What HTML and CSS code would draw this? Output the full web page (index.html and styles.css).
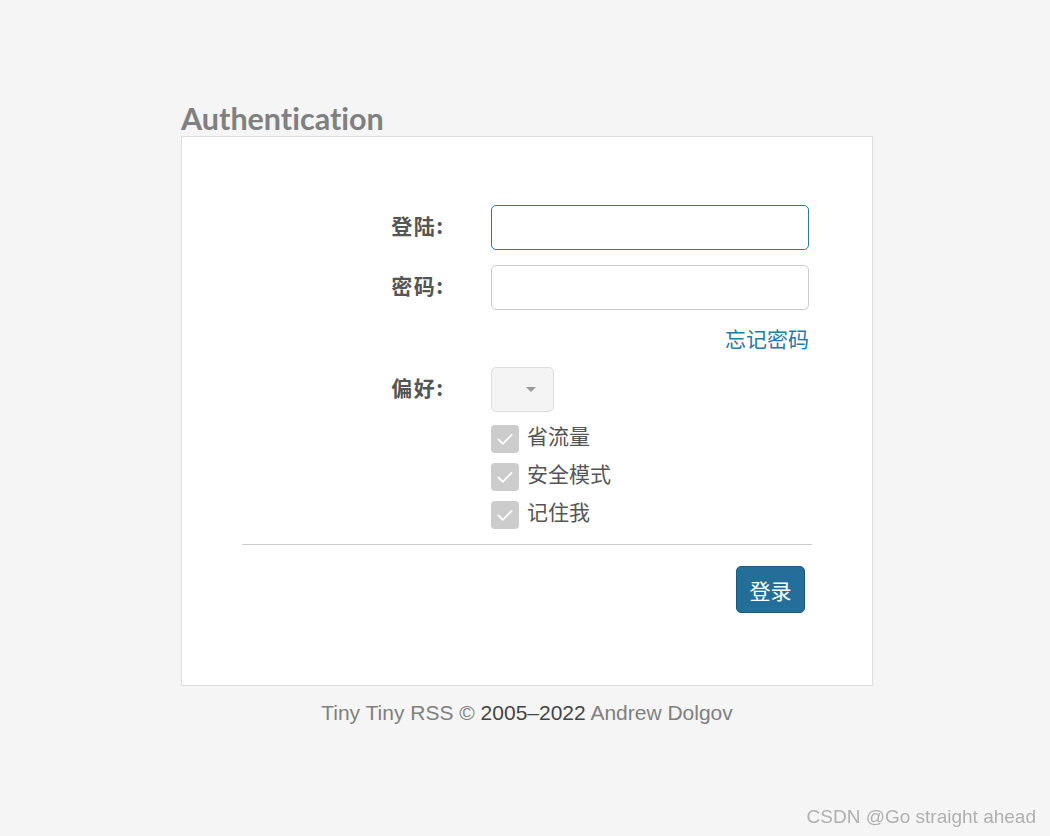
FILE: index.html
```html
<!DOCTYPE html>
<html lang="zh">
<head>
<meta charset="utf-8">
<title>Tiny Tiny RSS : Login</title>
<link rel="stylesheet" href="styles.css">
</head>
<body>
<div class="container">
  <h1 class="title">Authentication</h1>
  <div class="panel">
    <form class="login-form">
      <div class="row">
        <label class="label">登陆:</label>
        <input class="input focused" type="text">
      </div>
      <div class="row">
        <label class="label">密码:</label>
        <input class="input" type="password">
      </div>
      <div class="row link-row">
        <span></span>
        <a class="forgot" href="#">忘记密码</a>
      </div>
      <div class="row">
        <label class="label">偏好:</label>
        <div class="select"><span class="caret"></span></div>
      </div>
      <div class="row checks-row">
        <span></span>
        <div class="checks">
          <div class="check"><span class="box"><svg viewBox="0 0 28 28" width="28" height="28"><path d="M7.5 14.5 L11.8 18.8 L20.5 10" fill="none" stroke="#fff" stroke-width="1.8" stroke-linecap="round" stroke-linejoin="round"/></svg></span><span class="check-text">省流量</span></div>
          <div class="check"><span class="box"><svg viewBox="0 0 28 28" width="28" height="28"><path d="M7.5 14.5 L11.8 18.8 L20.5 10" fill="none" stroke="#fff" stroke-width="1.8" stroke-linecap="round" stroke-linejoin="round"/></svg></span><span class="check-text">安全模式</span></div>
          <div class="check"><span class="box"><svg viewBox="0 0 28 28" width="28" height="28"><path d="M7.5 14.5 L11.8 18.8 L20.5 10" fill="none" stroke="#fff" stroke-width="1.8" stroke-linecap="round" stroke-linejoin="round"/></svg></span><span class="check-text">记住我</span></div>
        </div>
      </div>
      <hr class="divider">
      <div class="actions">
        <button class="btn" type="button">登录</button>
      </div>
    </form>
  </div>
  <div class="footer">Tiny Tiny RSS © <span class="years">2005–2022</span> Andrew Dolgov</div>
</div>
<div class="watermark">CSDN @Go straight ahead</div>
</body>
</html>
```
FILE: styles.css
```css
html, body {
  margin: 0;
  padding: 0;
  background: #f5f5f5;
}
body {
  font-family: "Noto Sans CJK SC", "Noto Sans", sans-serif;
  color: #555;
  height: 836px;
  overflow: hidden;
}
.container {
  width: 692px;
  margin: 0 0 0 181px;
  padding-top: 100px;
}
.title {
  margin: 0;
  font-family: Lato, "Open Sans", sans-serif;
  font-weight: 700;
  font-size: 30.5px;
  line-height: 36px;
  color: #808080;
  font-variant-ligatures: none;
}
.panel {
  background: #fff;
  border: 1px solid #ddd;
  box-sizing: border-box;
  height: 550px;
  padding: 68px 60px 0 60px;
}
.login-form {
  display: flex;
  flex-direction: column;
}
.row {
  display: grid;
  grid-template-columns: 201px 318px;
  column-gap: 48px;
  align-items: center;
  margin-bottom: 15px;
}
.label {
  text-align: right;
  font-weight: 700;
  font-size: 21px;
  letter-spacing: 1.5px;
  margin-right: -1.5px;
  color: #555;
  position: relative;
  top: -3px;
}
.input {
  box-sizing: border-box;
  height: 45px;
  width: 318px;
  border: 1px solid #ccc;
  border-radius: 5px;
  background: #fff;
  margin: 0;
  outline: none;
}
.input.focused {
  border-color: #257aa6;
}
.link-row {
  height: 27px;
}
.forgot {
  justify-self: end;
  color: #257aa6;
  text-decoration: none;
  font-size: 21px;
  line-height: 27px;
}
.select {
  box-sizing: border-box;
  width: 63px;
  height: 45px;
  background: #f4f4f4;
  border: 1px solid #ddd;
  border-radius: 5px;
  display: flex;
  align-items: center;
  justify-content: flex-end;
  padding-right: 17px;
}
.caret {
  width: 0;
  height: 0;
  border-left: 5px solid transparent;
  border-right: 5px solid transparent;
  border-top: 5px solid #999;
}
.checks-row {
  margin-top: -2px;
  margin-bottom: 15px;
}
.checks {
  display: flex;
  flex-direction: column;
  gap: 10px;
}
.check {
  display: flex;
  align-items: center;
  height: 28px;
  gap: 8px;
}
.box {
  width: 28px;
  height: 28px;
  background: #ccc;
  border-radius: 4px;
  display: block;
}
.box svg {
  display: block;
}
.check-text {
  font-size: 21px;
  color: #555;
  line-height: 28px;
  position: relative;
  top: -4px;
}
.divider {
  margin: 0 0 21px 0;
  border: 0;
  border-top: 1px solid #ccc;
  height: 0;
}
.actions {
  display: flex;
  justify-content: flex-end;
  padding-right: 7px;
}
.btn {
  box-sizing: border-box;
  width: 69px;
  height: 47px;
  background: #236f99;
  border: 1px solid #1c5a7d;
  border-radius: 5px;
  color: #fff;
  font-family: "Noto Sans CJK SC", sans-serif;
  font-size: 21px;
  padding: 0;
}
.footer {
  text-align: center;
  font-family: "Liberation Sans", Arial, sans-serif;
  font-size: 21px;
  color: #808080;
  margin-top: 15px;
  line-height: 24px;
}
.years {
  color: #444;
}
.watermark {
  position: fixed;
  right: 14px;
  bottom: 8px;
  font-family: "Liberation Sans", Arial, sans-serif;
  font-size: 19px;
  color: #b0b0b0;
}
```
